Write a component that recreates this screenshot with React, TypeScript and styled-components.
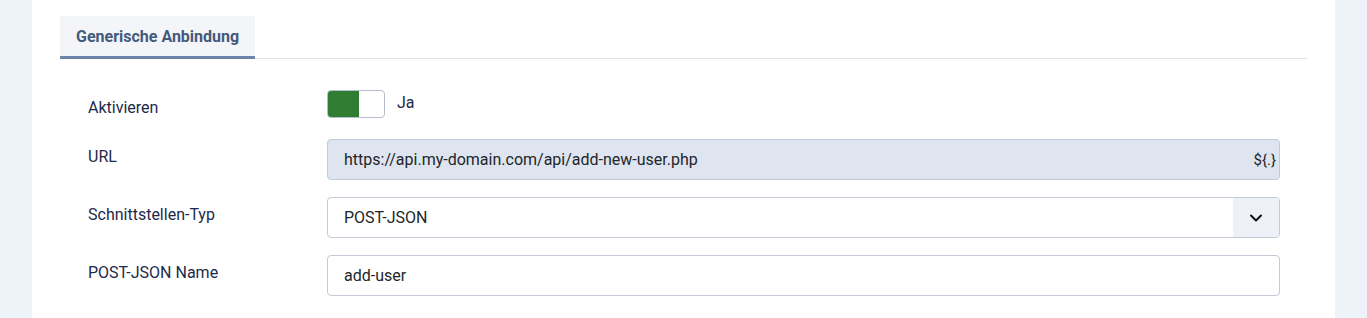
import React from 'react';
import styled, { createGlobalStyle } from 'styled-components';
import { ChevronDown } from 'lucide-react';

const GlobalStyle = createGlobalStyle`
  html, body {
    margin: 0;
    padding: 0;
    background: #eef3fa;
    font-family: Roboto, 'Liberation Sans', sans-serif;
  }
`;

const Page = styled.div`
  height: 318px;
  padding: 0 32px;
  overflow: hidden;
`;

const Card = styled.div`
  background: #fff;
  height: 100%;
  padding: 16px 28px 0;
`;

const TabBar = styled.div`
  display: flex;
  border-bottom: 1px solid #dfe3e8;
`;

const Tab = styled.div`
  background: #f3f5f8;
  color: #44597b;
  font-weight: 700;
  font-size: 16px;
  height: 40px;
  line-height: 42px;
  padding: 0 16px;
  border-bottom: 3px solid #6b84a8;
  margin-bottom: -1px;
`;

const Form = styled.div`
  padding: 30px 27px 0 28px;
`;

const Row = styled.div<{ $gap?: number }>`
  display: grid;
  grid-template-columns: 239px 1fr;
  margin-bottom: ${(p) => p.$gap ?? 17}px;
`;

const Label = styled.div<{ $offset?: number }>`
  color: #1c2a4b;
  font-size: 16px;
  line-height: 22px;
  padding-top: ${(p) => p.$offset ?? 7}px;
`;

const ToggleWrap = styled.div`
  display: flex;
  align-items: center;
  gap: 12px;
  height: 28px;
  margin-top: 1px;
`;

const Switch = styled.div`
  width: 56px;
  height: 26px;
  border: 1px solid #b3bdcc;
  border-radius: 4px;
  display: flex;
  overflow: hidden;
`;

const SwitchKnob = styled.div<{ $on: boolean }>`
  width: 31px;
  background: ${(p) => (p.$on ? '#2e7d32' : 'transparent')};
`;

const ToggleText = styled.span`
  color: #1c2a4b;
  font-size: 16px;
  margin-top: -4px;
`;

const Field = styled.div<{ $readonly?: boolean }>`
  height: 39px;
  border: 1px solid #c3cad6;
  border-radius: 4px;
  background: ${(p) => (p.$readonly ? '#dfe5f0' : '#fff')};
  display: flex;
  align-items: center;
  overflow: hidden;
`;

const FieldText = styled.span`
  flex: 1;
  padding-left: 16px;
  color: #22262a;
  font-size: 16px;
`;

const Addon = styled.span`
  color: #22262a;
  font-size: 15px;
  padding-right: 3px;
`;

const SelectButton = styled.div`
  width: 46px;
  height: 100%;
  background: #eef2f8;
  display: flex;
  align-items: center;
  justify-content: center;
  color: #111;
`;

export default function App() {
  return (
    <Page>
      <GlobalStyle />
      <Card>
        <TabBar>
          <Tab>Generische Anbindung</Tab>
        </TabBar>
        <Form>
          <Row $gap={20}>
            <Label $offset={8}>Aktivieren</Label>
            <ToggleWrap>
              <Switch>
                <SwitchKnob $on />
              </Switch>
              <ToggleText>Ja</ToggleText>
            </ToggleWrap>
          </Row>
          <Row>
            <Label>URL</Label>
            <Field $readonly>
              <FieldText>https://api.my-domain.com/api/add-new-user.php</FieldText>
              <Addon>{'${.}'}</Addon>
            </Field>
          </Row>
          <Row>
            <Label>Schnittstellen-Typ</Label>
            <Field>
              <FieldText>POST-JSON</FieldText>
              <SelectButton>
                <ChevronDown size={20} strokeWidth={2.4} />
              </SelectButton>
            </Field>
          </Row>
          <Row>
            <Label>POST-JSON Name</Label>
            <Field>
              <FieldText>add-user</FieldText>
            </Field>
          </Row>
        </Form>
      </Card>
    </Page>
  );
}
